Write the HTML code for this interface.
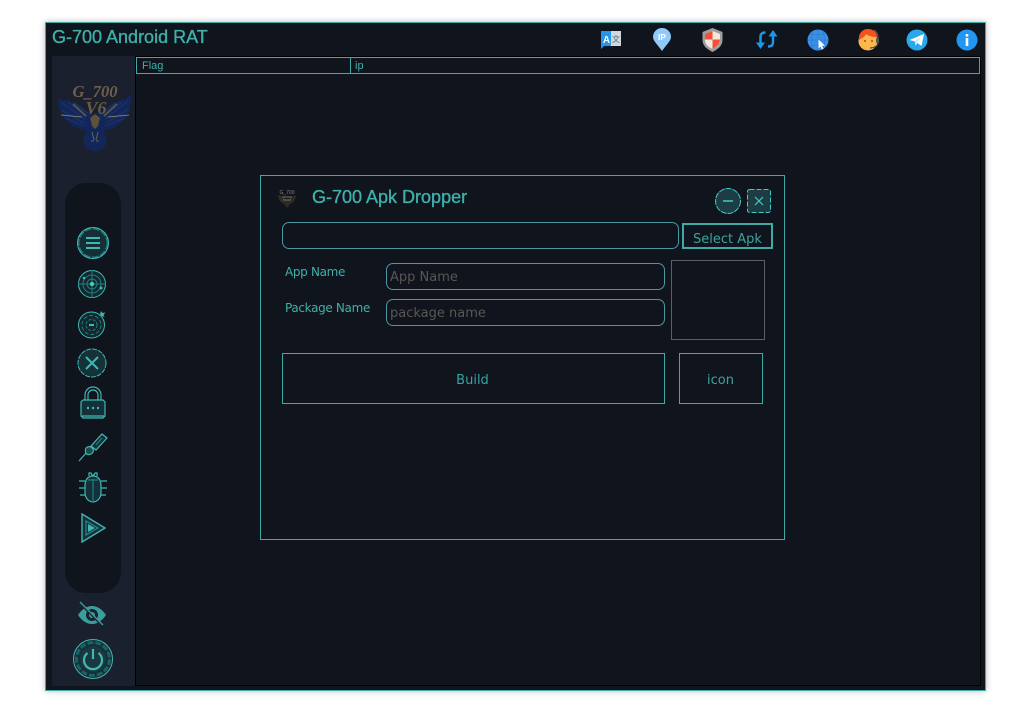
<!DOCTYPE html>
<html><head><meta charset="utf-8"><title>G-700 Android RAT</title>
<style>
html,body{margin:0;padding:0;background:#fff;width:1013px;height:714px;overflow:hidden}
.a{position:absolute;box-sizing:border-box}
.t{position:absolute;white-space:nowrap;color:#3aa3a3;font-family:"DejaVu Sans",sans-serif}
.h{font-family:"Liberation Sans",sans-serif;color:#3fb0aa;font-weight:400;-webkit-text-stroke:.35px #3fb0aa}
svg{position:absolute;overflow:visible}
</style></head><body>
<div class="a" style="left:45px;top:22px;width:941px;height:669px;background:#0f141d;border:1px solid #3fa9a5;box-shadow:0 0 6px rgba(0,0,0,.28)"></div>
<div class="t h" style="left:52px;top:27px;font-size:18px;line-height:20px">G-700 Android RAT</div>

<!-- sidebar -->
<div class="a" style="left:52px;top:56px;width:83px;height:630px;background:#1a202d"></div>
<div class="a" style="left:65px;top:183px;width:56px;height:410px;background:#0f141d;border-radius:21px"></div>
<!-- main -->
<div class="a" style="left:135px;top:56px;width:846px;height:630px;background:#0f141d;border:1px solid #000"></div>
<div class="a" style="left:136px;top:57px;width:215px;height:17px;border:1px solid #3fa9a5"></div>
<div class="a" style="left:350px;top:57px;width:630px;height:17px;border:1px solid #3fa9a5"></div>
<div class="t" style="left:142px;top:59px;font:11px/15px 'Liberation Sans',sans-serif;color:#3fb0aa">Flag</div>
<div class="t" style="left:355px;top:59px;font:11px/15px 'Liberation Sans',sans-serif;color:#3fb0aa">ip</div>

<!-- logo -->
<svg style="left:55px;top:75px" width="80" height="80" viewBox="0 0 80 80">
<path d="M3 24C12 25 24 27 31 37l9 3 9-3C56 27 68 25 77 20 76 34 71 46 60 52 56 54 52 55 48 56 52 62 53 66 50 71 47 75 43 76 40 76S33 75 30 71C27 66 28 62 32 56 28 55 24 54 20 52 9 46 4 36 3 24z" fill="#12265a"/>
<path d="M7 28 30 44M13 27 32 41M20 28 34 39M6 35 29 48M10 43 29 51M73 26 50 44M67 27 48 41M60 28 46 39M74 34 51 48M70 43 51 51" stroke="#1d3268" stroke-width="1.200" fill="none"/>
<path d="M6 40 27 42M74 40 53 42" stroke="#7c7a68" stroke-width="1" fill="none"/>
<path d="M18 29 31 41M62 29 49 41" stroke="#54534e" stroke-width="2" fill="none"/>
<path d="M35 43l5-4 5 4-2 8-3 3-3-3z" fill="#5e5039"/>
<path d="M37 57l2 8M43 57l-2 8M36 66h3M41 66h3" stroke="#66665a" stroke-width="1" fill="none"/>
<text x="40" y="22" text-anchor="middle" font-family="'Liberation Serif',serif" font-style="italic" font-weight="700" font-size="17" fill="#6e5f4c" textLength="45" lengthAdjust="spacingAndGlyphs">G_700</text>
<text x="41" y="39" text-anchor="middle" font-family="'Liberation Serif',serif" font-style="italic" font-weight="700" font-size="18" fill="#6b5b46">V6</text>
</svg>

<!-- top icons -->
<svg style="left:600px;top:29px" width="22" height="22" viewBox="0 0 22 22">
<path d="M1 2h11v15H4l-3 3z" fill="#2196f3"/><rect x="11" y="2" width="10" height="15" fill="#cfd8dc"/>
<text x="6.500" y="14" text-anchor="middle" font-family="'Liberation Sans',sans-serif" font-weight="700" font-size="10" fill="#fff">A</text>
<text x="16" y="13" text-anchor="middle" font-family="'Noto Sans CJK SC',sans-serif" font-size="8" fill="#546e7a">文</text>
</svg>
<svg style="left:653px;top:28px" width="18" height="24" viewBox="0 0 18 24">
<path d="M9 23C5 17 0 13 0 9a9 9 0 0 1 18 0c0 4-5 8-9 14z" fill="#90caf9"/>
<text x="9" y="12" text-anchor="middle" font-family="'Liberation Sans',sans-serif" font-weight="700" font-size="8.500" fill="#fff">IP</text>
</svg>
<svg style="left:702px;top:28px" width="21" height="24" viewBox="0 0 21 24">
<path d="M10.500 0 20.500 4v8c0 6-5 9.500-10 12C5.500 21.500.5 18 .5 12V4z" fill="#9e9e9e"/>
<path d="M10.500 3 18 6v6c0 4.500-3.500 7-7.500 9C6.500 19 3 16.500 3 12V6z" fill="#f5e6e0"/>
<path d="M10.500 3v8.500H3V6zM10.500 11.500H18c0 4.500-3.500 7.500-7.500 9.500z" fill="#f0533a"/>
</svg>
<svg style="left:756px;top:29px" width="22" height="22" viewBox="0 0 22 22" fill="none" stroke="#1e96e8" stroke-width="2.500">
<path d="M9.500 3.500C5.500 3.500 4.500 5.500 4.500 8v7"/><path d="M0 13.500h9L4.500 20z" fill="#1e96e8" stroke="none"/>
<path d="M12 17.500c4 0 5-2 5-4.500V6"/><path d="M12.500 7.500h9L17 1z" fill="#1e96e8" stroke="none"/>
</svg>
<svg style="left:807px;top:29px" width="22" height="22" viewBox="0 0 22 22">
<circle cx="11" cy="11" r="10.500" fill="#3a8fe8"/>
<path d="M1 11h20M11 1v20M3 5.500h16M3 16.500h16M6 2.500c-2 5-2 12 0 17M16 2.500c2 5 2 12 0 17" stroke="#2f7ed0" stroke-width=".8" fill="none"/>
<path d="M11.500 10.500v9l2-2 1.500 3 1.500-.7-1.500-3h3z" fill="#fff"/>
</svg>
<svg style="left:858px;top:28px" width="22" height="24" viewBox="0 0 22 24">
<circle cx="10" cy="13" r="9.500" fill="#ffb74d"/>
<path d="M1 12C0 5 5 1 10 1s9 3 9 8c-4 0-9-1-11-3-1 3-4 4-7 6z" fill="#f4511e"/>
<path d="M16 2c3 2 4 5 4 8" stroke="#555" stroke-width="1.300" fill="none"/>
<rect x="18" y="10" width="3" height="5" rx="1" fill="#555"/>
<path d="M20 15c0 3-4 5-8 5" stroke="#444" stroke-width="1.200" fill="none"/>
<circle cx="7" cy="13" r="1" fill="#8d5a2b"/><circle cx="14" cy="13" r="1" fill="#8d5a2b"/>
</svg>
<svg style="left:906px;top:29px" width="22" height="22" viewBox="0 0 22 22">
<circle cx="11" cy="11" r="10.500" fill="#29a9ec"/>
<path d="M3.500 11 18 5l-2.500 12-4-3-2 2.500-.7-4z" fill="#fff"/><path d="M8.800 12.500 16 7l-5 6-1.300 3z" fill="#c5e3f5"/>
</svg>
<svg style="left:956px;top:29px" width="22" height="22" viewBox="0 0 22 22">
<circle cx="11" cy="11" r="10.500" fill="#2196f3"/>
<rect x="9.700" y="9" width="2.600" height="8" fill="#fff"/><rect x="9.700" y="5" width="2.600" height="2.600" fill="#fff"/>
</svg>

<!-- side icons -->
<svg style="left:76px;top:226px" width="34" height="34" viewBox="0 0 34 34" fill="none">
<circle cx="17" cy="17" r="14.500" fill="#143036" stroke="#257478" stroke-width="2" stroke-dasharray="7 1.500"/><circle cx="17" cy="17" r="15.500" stroke="#3fbab6" stroke-width="1"/>
<path d="M10 12h14M10 17h14M10 22h14" stroke="#3fb8b3" stroke-width="2"/>
</svg>
<svg style="left:77px;top:269px" width="30" height="30" viewBox="0 0 30 30" fill="none" stroke="#247c7e">
<circle cx="15" cy="15" r="13.500" stroke="#3fbab6" fill="#12282e"/><circle cx="15" cy="15" r="9"/><circle cx="15" cy="15" r="5"/>
<path d="M1 15h28M15 1v28"/><circle cx="15" cy="15" r="2.200" fill="#45c9c4" stroke="none"/><circle cx="7" cy="9" r="1.300" fill="#3fb8b3" stroke="none"/><circle cx="24" cy="19" r="1.500" fill="#3fb8b3" stroke="none"/>
</svg>
<svg style="left:77px;top:310px" width="30" height="30" viewBox="0 0 30 30" fill="none" stroke="#247c7e">
<circle cx="14.500" cy="15" r="13" stroke="#3fbab6" fill="#12282e"/><circle cx="14.500" cy="15" r="9.500" stroke-dasharray="4 2"/><circle cx="14.500" cy="15" r="5.500" stroke-dasharray="3 1.500"/>
<rect x="12" y="14" width="5" height="2" fill="#3fb8b3" stroke="none"/><path d="M23 4l1-3 1.500 2 3-.5-2 2.500 1 2-3-1z" fill="#3fb8b3" stroke="none"/>
</svg>
<svg style="left:77px;top:348px" width="30" height="30" viewBox="0 0 30 30" fill="none">
<circle cx="15" cy="15" r="14" fill="#153238" stroke="#3fbab6" stroke-dasharray="5 1"/>
<path d="M9 9l12 12M21 9 9 21" stroke="#3fb8b3" stroke-width="2"/>
</svg>
<svg style="left:80px;top:387px" width="26" height="33" viewBox="0 0 26 33" fill="none" stroke="#3fb8b3" stroke-width="1.200">
<path d="M5 13V8a8 8 0 0 1 16 0v5M8 13V8a5 5 0 0 1 10 0v5"/>
<path d="M3 13h20l2 2v14l-2 2H3l-2-2V15z" fill="#143038"/>
<path d="M7 21h2M12 21h2M17 21h2" stroke-width="2.200"/><path d="M2 29h22"/>
</svg>
<svg style="left:77px;top:431px" width="32" height="32" viewBox="0 0 32 32" fill="none" stroke="#3fb8b3" stroke-width="1.200">
<path d="M2 30 10 21"/><path d="M9 17c2-2 5-2 7 1 1 2 0 4-2 5s-4 1-5-1-1-3 0-5z" fill="#1c4a50"/>
<path d="M14 15 25 3l5 4-11 12z" fill="#143038"/><path d="M19 14l6-7" stroke="#247c7e"/>
</svg>
<svg style="left:79px;top:471px" width="28" height="32" viewBox="0 0 28 32" fill="none" stroke="#3fb8b3" stroke-width="1.200">
<path d="M10 5V2h2l1 2h2l1-2h2v3"/><path d="M14 5c6 0 8 5 8 10v7c0 5-4 9-8 9s-8-4-8-9v-7C6 10 8 5 14 5z" fill="#143038"/>
<path d="M14 8v23M9 9h10" stroke="#247c7e"/>
<path d="M0 10h6M0 17h6M1 24h5M22 10h6M22 17h6M22 24h5"/>
</svg>
<svg style="left:80px;top:512px" width="27" height="32" viewBox="0 0 27 32" fill="none" stroke="#3fb8b3" stroke-width="1.400">
<path d="M2 2 25 16 2 30z" fill="#143038"/><path d="M6 9 18 16 6 23z" stroke="#247c7e"/>
<path d="M8 12l7 4-7 4z" fill="#3fb8b3" stroke="none"/>
</svg>
<svg style="left:78px;top:601px" width="28" height="26" viewBox="0 0 28 26" fill="none">
<path d="M0 14C4 8 9 5 14 5s10 3 14 9c-4 6-9 9-14 9S4 20 0 14z" fill="#3a9f9c"/>
<circle cx="14" cy="14" r="6" fill="#1a202d"/><circle cx="14" cy="14" r="3" fill="#3a9f9c"/>
<path d="M2 2 25 25" stroke="#1a202d" stroke-width="2.500"/><path d="M2 1 25 24" stroke="#3a9f9c" stroke-width="1.300"/>
</svg>
<svg style="left:72px;top:638px" width="42" height="42" viewBox="0 0 42 42" fill="none">
<circle cx="21" cy="21" r="19.500" fill="#143038" stroke="#3fbab6" stroke-width="1"/>
<circle cx="21" cy="21" r="16.500" stroke="#1f6064" stroke-width="3" stroke-dasharray="6 2"/>
<circle cx="21" cy="21" r="13" fill="#1a3840"/>
<path d="M15.500 15a9 9 0 1 0 11 0" stroke="#3fb8b3" stroke-width="2.200"/><path d="M21 11v10" stroke="#3fb8b3" stroke-width="2.200"/>
</svg>

<!-- dialog -->
<div class="a" style="left:260px;top:175px;width:525px;height:365px;background:#0f141d;border:1px solid #3fa9a5"></div>
<svg style="left:276px;top:188px" width="22" height="21" viewBox="0 0 22 21">
<path d="M2 7c3 1 6 2 9 5 3-3 6-4 9-5 0 5-3 8-6 9l-3 4-3-4c-3-1-6-4-6-9z" fill="#2e2a25"/>
<path d="M6 9h10M7 12h8" stroke="#6b655a" stroke-width="1.200"/>
<text x="11" y="6" text-anchor="middle" font-family="'Liberation Sans',sans-serif" font-size="5" fill="#8a8478">G_700</text>
</svg>
<div class="t h" style="left:312px;top:187px;font-size:18px;line-height:20px">G-700 Apk Dropper</div>
<svg style="left:714px;top:187px" width="28" height="28" viewBox="0 0 28 28" fill="none">
<circle cx="14" cy="14" r="12.500" fill="#1d3d45" stroke="#45c9c4" stroke-dasharray="6 1"/><path d="M9 14h10" stroke="#45c9c4" stroke-width="1.500"/>
</svg>
<svg style="left:746px;top:188px" width="26" height="26" viewBox="0 0 26 26" fill="none">
<rect x="1.500" y="1.500" width="23" height="23" rx="2" fill="#1d3d45" stroke="#45c9c4" stroke-dasharray="5 2"/><path d="M9 9l8 8M17 9l-8 8" stroke="#45c9c4" stroke-width="1.200"/>
</svg>

<div class="a" style="left:282px;top:222px;width:397px;height:27px;border:1px solid #4d96a3;border-radius:7px"></div>
<div class="a" style="left:682px;top:223px;width:91px;height:26px;border:2px solid #3fa9a5;overflow:hidden"><div class="t" style="left:0;right:0;top:5px;text-align:center;font-size:13px;line-height:20px">Select Apk</div></div>

<div class="t" style="left:285px;top:265px;font-size:12px;line-height:15px;letter-spacing:-.33px;color:#3fb0aa">App Name</div>
<div class="t" style="left:285px;top:301px;font-size:12px;line-height:15px;letter-spacing:-.33px;color:#3fb0aa">Package Name</div>
<div class="a" style="left:386px;top:263px;width:279px;height:27px;border:1px solid #4d96a3;border-radius:7px"></div>
<div class="a" style="left:386px;top:299px;width:279px;height:27px;border:1px solid #4d96a3;border-radius:7px"></div>
<div class="t" style="left:390px;top:269px;font-size:13px;line-height:17px;color:#5a5654">App Name</div>
<div class="t" style="left:390px;top:305px;font-size:13px;line-height:17px;color:#5a5654">package name</div>
<div class="a" style="left:671px;top:260px;width:94px;height:80px;border:1px solid #5c5f63"></div>

<div class="a" style="left:282px;top:353px;width:383px;height:51px;border:1px solid #3fa9a5"></div>
<div class="a" style="left:679px;top:353px;width:84px;height:51px;border:1px solid #3fa9a5"></div>
<div class="t" style="left:282px;width:381px;top:372px;text-align:center;font-size:13px;line-height:17px">Build</div>
<div class="t" style="left:679px;width:83px;top:372px;text-align:center;font-size:13px;line-height:17px">icon</div>
</body></html>
